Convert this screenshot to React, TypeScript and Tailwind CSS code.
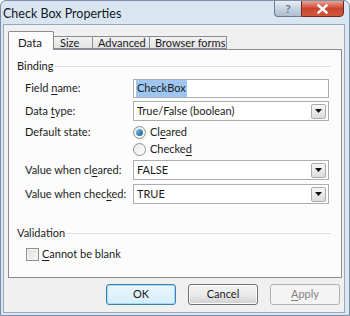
import React from 'react';

const font = { fontFamily: 'Lato, "Liberation Sans", Arial, sans-serif' };

function U({ children }: { children: React.ReactNode }) {
  return <span className="underline underline-offset-2">{children}</span>;
}

function DropArrow() {
  return (
    <div className="w-[15px] h-[15px] mr-[2px] border border-[#a8adb3] rounded-[2px] bg-gradient-to-b from-[#f7f7f7] to-[#dcdcdc] flex items-center justify-center">
      <svg width="7" height="4" viewBox="0 0 7 4">
        <path d="M0 0 H7 L3.5 4 Z" fill="#111" />
      </svg>
    </div>
  );
}

function Select({ value }: { value: string }) {
  return (
    <div className="w-[196px] h-[20px] border border-[#abadb3] bg-white flex items-center justify-between">
      <span className="pl-[3px]">{value}</span>
      <DropArrow />
    </div>
  );
}

function Row({ label, h, mt, children }: { label: React.ReactNode; h: string; mt: string; children?: React.ReactNode }) {
  return (
    <div className={`flex items-center ${h} ${mt}`}>
      <div className="w-[124px] shrink-0 pl-[16px] whitespace-nowrap">{label}</div>
      {children}
    </div>
  );
}

function Radio({ checked, label }: { checked?: boolean; label: React.ReactNode }) {
  return (
    <div className="flex items-center gap-[4px]">
      <div className="w-[13px] h-[13px] rounded-full border border-[#8e8f8f] bg-gradient-to-br from-[#e6e6e6] to-[#ffffff] flex items-center justify-center">
        {checked && <div className="w-[7px] h-[7px] rounded-full bg-gradient-to-br from-[#7fc4f2] to-[#0d5b8e]" />}
      </div>
      <span>{label}</span>
    </div>
  );
}

function Section({ title }: { title: string }) {
  return (
    <div className="flex items-center h-[14px] pl-[8px] pr-[10px]">
      <span>{title}</span>
      <div className="flex-1 ml-[2px] h-0 border-t border-[#d5dfe5]" />
    </div>
  );
}

function Btn({ children, primary, disabled }: { children: React.ReactNode; primary?: boolean; disabled?: boolean }) {
  return (
    <div
      className={`w-[70px] h-[21px] rounded-[3px] flex items-center justify-center border ${
        primary
          ? 'border-[#3c7fb1] shadow-[inset_0_0_0_1px_#9fdcf9] bg-gradient-to-b from-[#eaf6fd] to-[#d7eefb]'
          : disabled
          ? 'border-[#adb2b5] bg-[#f4f4f4] text-[#838383]'
          : 'border-[#707070] shadow-[inset_0_0_0_1px_#fcfcfc] bg-gradient-to-b from-[#f2f2f2] via-[#ebebeb] to-[#cfcfcf]'
      }`}
    >
      {children}
    </div>
  );
}

export default function App() {
  return (
    <div style={font} className="w-[350px] h-[316px] bg-[#dae5f2] border border-[#7d8fa6] rounded-t-[6px] flex flex-col text-[11px] text-[#1b1b1b] overflow-hidden">
      {/* title bar */}
      <div className="h-[23px] flex items-start justify-between shrink-0">
        <span className="pl-[2px] pt-[4px] text-[12.5px] text-[#111a24] whitespace-nowrap">Check Box Properties</span>
        <div className="flex mr-[5px] -mt-px">
          <div className="w-[27px] h-[17px] rounded-bl-[4px] border border-[#6d7c8f] border-r-0 bg-gradient-to-b from-[#e8eef5] via-[#c8d4e2] to-[#aebdd0] flex items-center justify-center text-[12px] font-bold text-[#6b7889]">?</div>
          <div className="w-[43px] h-[17px] rounded-br-[4px] border border-[#6d2a22] bg-gradient-to-b from-[#e8a493] via-[#c7452f] to-[#d2583a] flex items-center justify-center">
            <svg width="11" height="10" viewBox="0 0 11 10">
              <path d="M1.5 1.5 L9.5 8.5 M9.5 1.5 L1.5 8.5" stroke="#fff" strokeWidth="2.4" strokeLinecap="square" />
            </svg>
          </div>
        </div>
      </div>

      {/* client area */}
      <div className="flex-1 ml-[2px] mr-[4px] mb-[2px] bg-[#f0f0f0] border border-[#97a8bd] flex flex-col pt-[6px] pl-[4px] pr-[2px]">
        {/* tabs */}
        <div className="flex items-end h-[18px] relative z-10 whitespace-nowrap">
          <div className="w-[46px] h-[19px] -mb-px border border-[#898c95] border-b-0 bg-[#fcfcfc] rounded-t-[2px] pl-[9px] pt-[2px] text-[11.5px]">Data</div>
          <div className="w-[39px] h-[13px] border border-[#898c95] border-l-0 bg-gradient-to-b from-[#f2f2f2] to-[#e3e3e3] pl-[6px] leading-[12px]">Size</div>
          <div className="w-[57px] h-[13px] border border-[#898c95] border-l-0 bg-gradient-to-b from-[#f2f2f2] to-[#e3e3e3] pl-[5px] leading-[12px]">Advanced</div>
          <div className="w-[77px] h-[13px] border border-[#898c95] border-l-0 bg-gradient-to-b from-[#f2f2f2] to-[#e3e3e3] pl-[5px] leading-[12px]">Browser forms</div>
        </div>

        {/* panel */}
        <div className="w-[334px] h-[229px] border border-[#898c95] bg-[#fcfcfc] flex flex-col pt-[9px]">
          <Section title="Binding" />
          <Row label={<>Field <U>n</U>ame:</>} h="h-[19px]" mt="mt-[6px]">
            <div className="w-[196px] h-[19px] border border-[#abadb3] bg-white flex items-center pl-[2px]">
              <span className="bg-[#9ec6f0] px-[1px]">CheckBox</span>
            </div>
          </Row>
          <Row label={<>Data <U>t</U>ype:</>} h="h-[20px]" mt="mt-[3px]">
            <Select value="True/False (boolean)" />
          </Row>
          <Row label="Default state:" h="h-[16px]" mt="mt-[3px]">
            <Radio checked label={<>Cl<U>e</U>ared</>} />
          </Row>
          <Row label="" h="h-[16px]" mt="mt-[1px]">
            <Radio label={<>Checke<U>d</U></>} />
          </Row>
          <Row label={<>Value when cl<U>e</U>ared:</>} h="h-[20px]" mt="mt-[3px]">
            <Select value="FALSE" />
          </Row>
          <Row label={<>Value when chec<U>k</U>ed:</>} h="h-[20px]" mt="mt-[4px]">
            <Select value="TRUE" />
          </Row>
          <div className="mt-[22px]">
            <Section title="Validation" />
          </div>
          <div className="flex items-center gap-[3px] h-[14px] mt-[7px] pl-[17px]">
            <div className="w-[13px] h-[13px] border border-[#8e8f8f] bg-gradient-to-br from-[#dcdcdc] to-[#fafafa] shadow-[inset_0_0_0_1px_#f4f4f4]" />
            <span><U>C</U>annot be blank</span>
          </div>
        </div>

        {/* buttons */}
        <div className="flex justify-end gap-[12px] mt-[6px] pr-[2px]">
          <Btn primary>OK</Btn>
          <Btn>Cancel</Btn>
          <Btn disabled><U>A</U>pply</Btn>
        </div>
      </div>
    </div>
  );
}
